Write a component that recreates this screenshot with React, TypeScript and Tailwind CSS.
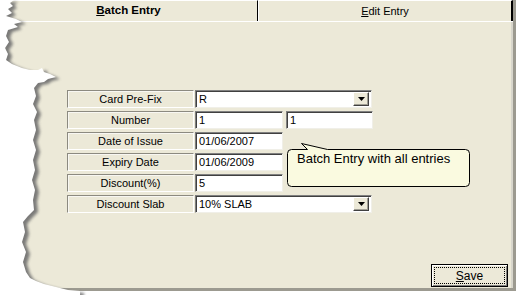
import type { ReactNode } from "react";

const TORN =
  "0,0 14,0 10,3 13,6 8,9 12,13 6,16 16,19 22,22 14,24 18,27 8,30 6,36 9,42 5,48 8,54 6,60 12,64 22,68 30,70 38,70 42,68 44,72 50,74 56,77 48,79 44,82 38,83 34,88 36,96 33,104 37,112 34,120 36,130 33,140 36,150 33,160 35,170 32,180 35,190 33,200 34,210 28,216 23,222 25,232 22,242 26,252 23,262 26,272 30,278 36,281 44,284 52,286 60,288 68,290 80,291 80,295 0,295";

function Label({ children }: { children: ReactNode }) {
  return (
    <div className="flex h-[18px] w-[127px] items-center justify-center border border-t-[#8c8a80] border-l-[#8c8a80] border-r-white border-b-white shadow-[inset_1px_1px_0_#f8f7f2]">
      {children}
    </div>
  );
}

function Field({ value, width }: { value: string; width: string }) {
  return (
    <div
      className={`flex h-[18px] ${width} items-center bg-white pl-[3px] border border-t-[#808080] border-l-[#808080] border-r-[#f0efe8] border-b-[#f0efe8] shadow-[inset_1px_1px_0_#404040]`}
    >
      {value}
    </div>
  );
}

function Combo({ value }: { value: string }) {
  return (
    <div className="flex h-[18px] w-[177px] items-center bg-white pl-[3px] pr-[2px] border border-t-[#808080] border-l-[#808080] border-r-[#f0efe8] border-b-[#f0efe8] shadow-[inset_1px_1px_0_#404040]">
      <span className="flex-1">{value}</span>
      <div className="flex h-[14px] w-[16px] items-center justify-center bg-[#ECE9D8] border border-t-white border-l-white border-r-[#404040] border-b-[#404040] shadow-[inset_-1px_-1px_0_#a09e94]">
        <svg width="7" height="4" viewBox="0 0 7 4">
          <path d="M0 0h7L3.5 4z" fill="#000" />
        </svg>
      </div>
    </div>
  );
}

export default function App() {
  return (
    <div className="relative h-[295px] w-[517px] overflow-hidden bg-white font-['Liberation_Sans',Arial,sans-serif] text-[11px] text-black">
      <div className="flex h-[291px] w-[516px] flex-col bg-[#ECE9D8] border-r-[3px] border-b-[3px] border-r-[#9c9a90] border-b-[#9c9a90]">
        {/* Tabs */}
        <div className="flex h-[22px] border-b border-b-white">
          <div className="flex w-[258px] items-center justify-center border-t border-t-white border-r border-r-black font-bold text-[11.5px]">
            <span>
              <span className="underline">B</span>atch Entry
            </span>
          </div>
          <div className="flex flex-1 items-center justify-center border-t border-t-white border-l border-l-white border-r-2 border-r-black">
            <span>
              <span className="underline">E</span>dit Entry
            </span>
          </div>
        </div>

        {/* Body */}
        <div className="flex flex-1 flex-col border-r-2 border-r-[#d8d6cc] pl-[67px] pt-[68px]">
          <div className="flex flex-col gap-[3px]">
            <div className="flex gap-px">
              <Label>Card Pre-Fix</Label>
              <Combo value="R" />
            </div>
            <div className="flex gap-px">
              <Label>Number</Label>
              <Field value="1" width="w-[88px]" />
              <div className="w-px" />
              <Field value="1" width="w-[87px]" />
            </div>
            <div className="flex gap-px">
              <Label>Date of Issue</Label>
              <Field value="01/06/2007" width="w-[88px]" />
            </div>
            <div className="flex gap-px">
              <Label>Expiry Date</Label>
              <Field value="01/06/2009" width="w-[88px]" />
            </div>
            <div className="flex gap-px">
              <Label>Discount(%)</Label>
              <Field value="5" width="w-[88px]" />
            </div>
            <div className="flex gap-px">
              <Label>Discount Slab</Label>
              <Combo value="10% SLAB" />
            </div>
          </div>

          <div className="mt-auto flex justify-end pb-[1px] pr-[3px]">
            <button className="flex h-[23px] w-[77px] items-center justify-center border border-black bg-[#ECE9D8] p-[2px] shadow-[inset_1px_1px_0_#fff,inset_-1px_-1px_0_#808080]">
              <span className="flex h-full w-full items-center justify-center border border-dotted border-black text-[12px]">
                <span>
                  <span className="underline">S</span>ave
                </span>
              </span>
            </button>
          </div>
        </div>
      </div>

      {/* torn left edge */}
      <svg className="absolute left-0 top-0" width="90" height="295" viewBox="0 0 90 295">
        <defs>
          <filter id="blur" x="-20%" y="-20%" width="140%" height="140%">
            <feGaussianBlur stdDeviation="1.8" />
          </filter>
        </defs>
        <polygon points={TORN} fill="#6e6e6e" opacity="0.9" transform="translate(4 2)" filter="url(#blur)" />
        <polygon points={TORN} fill="#ffffff" />
      </svg>

      {/* balloon tooltip */}
      <div className="absolute left-[284px] top-[140px] h-[50px] w-[190px]">
        <svg className="absolute left-0 top-0" width="190" height="50" viewBox="0 0 190 50">
          <path
            d="M7.5 9.5 L23.5 9.5 L17.5 3.5 L43.5 9.5 L181.5 9.5 Q185.5 9.5 185.5 13.5 L185.5 42.5 Q185.5 46.5 181.5 46.5 L7.5 46.5 Q3.5 46.5 3.5 42.5 L3.5 13.5 Q3.5 9.5 7.5 9.5 Z"
            fill="#FAFAE0"
            stroke="#000"
            strokeWidth="1"
          />
        </svg>
        <div className="absolute left-[13px] top-[10px] text-[13px] leading-[18px]">
          Batch Entry with all entries
        </div>
      </div>
    </div>
  );
}
